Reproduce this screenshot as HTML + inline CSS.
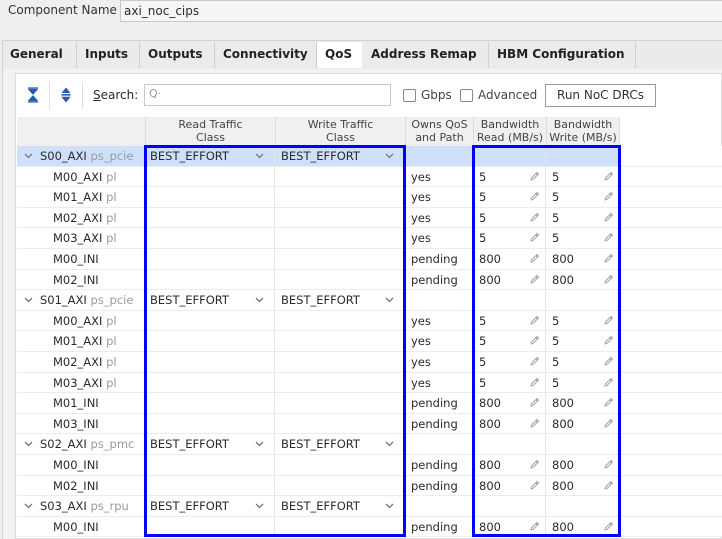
<!DOCTYPE html>
<html><head><meta charset="utf-8"><style>
*{box-sizing:border-box;margin:0;padding:0}
body{width:722px;height:539px;overflow:hidden;background:#efefef;font-family:"DejaVu Sans","Liberation Sans",sans-serif;font-size:11.5px;color:#2a2a2a;position:relative}
.abs{position:absolute}
.tab{position:absolute;top:42px;height:26px;line-height:25px;font-weight:bold;font-size:12px;color:#222;padding-left:8px;border-right:1px solid #cfcfcf}
#tbl{position:absolute;left:17px;top:146px;width:705px}
.r{display:flex;height:20.6px;line-height:20px;border-bottom:1px solid #ececec}
.r div{border-right:1px solid #e6e6e6;white-space:nowrap;overflow:hidden;position:relative}
.c0{width:128px}.c1{width:130px;padding-left:5px}.c2{width:130px;padding-left:6px}.c3{width:68px;padding-left:6px}.c4{width:73px;padding-left:6px}.c5{width:74px;padding-left:6px}
.r .c6{border:none;flex:1;background:#fff}
.sel .c0,.sel .c1,.sel .c2,.sel .c3,.sel .c4,.sel .c5{background:#cfe0fa}
.g{color:#9a9a9a}
.p{padding-left:7px}
.ch{display:inline-block;width:9px;height:6px;margin-right:7px;vertical-align:1px}
.k{padding-left:36px}
.dd{position:absolute;right:10px;top:7px;width:9px;height:6px}
.pen{position:absolute;right:5px;top:4px;width:11px;height:11px}
.box{position:absolute;border:3px solid #0000ff}
</style></head><body>
<svg width="0" height="0" style="position:absolute"><defs>
<symbol id="chv" viewBox="0 0 9 6"><path d="M1 1 L4.5 4.5 L8 1" fill="none" stroke="#777" stroke-width="1.3"/></symbol>
<symbol id="pn" viewBox="0 0 11 11"><path d="M2 9 L2.5 7 L8 1.5 L9.5 3 L4 8.5 Z M7 2.5 L8.5 4" fill="none" stroke="#999" stroke-width="0.9"/></symbol>
</defs></svg>
<div class="abs" style="left:8px;top:3px;font-size:12px;color:#333">Component Name</div>
<div class="abs" style="left:120px;top:0;width:610px;height:22px;background:#f5f5f5;border:1px solid #c8c8c8;padding:3px 3px;font-size:12px">axi_noc_cips</div>
<div class="abs" style="left:2px;top:40px;width:720px;height:29px;background:#ebebeb;border-top:1px solid #d2d2d2;border-left:1px solid #d2d2d2"></div>
<div class="tab" style="left:2px;width:75px">General</div>
<div class="tab" style="left:77px;width:63px">Inputs</div>
<div class="tab" style="left:140px;width:75px">Outputs</div>
<div class="tab" style="left:215px;width:102px">Connectivity</div>
<div class="tab" style="left:317px;width:45px;background:#fff;border-right:none">QoS</div>
<div class="tab" style="left:363px;width:126px">Address Remap</div>
<div class="tab" style="left:489px;width:147px">HBM Configuration</div>
<div class="abs" style="left:2px;top:69px;width:720px;height:470px;background:#f2f2f2;border-left:1px solid #d2d2d2"></div>
<div class="abs" style="left:15px;top:73px;width:707px;height:466px;background:#fff;border:1px solid #dcdcdc"></div>
<svg class="abs" style="left:27px;top:87px" width="12" height="16" viewBox="0 0 12 16"><path d="M1 1H11M2 2.5H10L6 7Z M6 9L10 13.5H2Z M1 15H11" fill="#2a5aa8" stroke="#2a5aa8" stroke-width="1.2"/></svg>
<div class="abs" style="left:49px;top:81px;width:1px;height:28px;background:#ddd"></div>
<svg class="abs" style="left:61px;top:87px" width="10" height="16" viewBox="0 0 10 16"><path d="M5 0.5L9.5 6H0.5Z M0.5 10H9.5L5 15.5Z" fill="#2a5aa8"/><path d="M0.5 7.5H9.5M0.5 8.8H9.5" stroke="#2a5aa8" stroke-width="0.9"/></svg>
<div class="abs" style="left:82px;top:81px;width:1px;height:28px;background:#ddd"></div>
<div class="abs" style="left:93px;top:88px;font-size:12px"><u>S</u>earch:</div>
<div class="abs" style="left:144px;top:84px;width:247px;height:22px;border:1px solid #c8c8c8;background:#fff;color:#999;padding:2px 4px;font-size:11px">Q·</div>
<div class="abs" style="left:403px;top:89px;width:13px;height:13px;border:1px solid #888;border-radius:2px"></div>
<div class="abs" style="left:421px;top:88px;color:#444;font-size:12px">Gbps</div>
<div class="abs" style="left:460px;top:89px;width:13px;height:13px;border:1px solid #888;border-radius:2px"></div>
<div class="abs" style="left:478px;top:88px;color:#444;font-size:12px">Advanced</div>
<div class="abs" style="left:545px;top:84px;width:111px;height:23px;border:1px solid #999;background:#fff;text-align:center;line-height:21px;color:#333;font-size:12px">Run NoC DRCs</div>
<div class="abs" style="left:17px;top:117px;width:603px;height:29px;background:#f0f0f0;font-size:11px;line-height:13px;color:#444">
<div class="abs" style="left:128px;width:130px;height:29px;border-left:1px solid #ddd;text-align:center;padding-top:1px">Read Traffic<br>Class</div>
<div class="abs" style="left:258px;width:130px;height:29px;border-left:1px solid #ddd;text-align:center;padding-top:1px">Write Traffic<br>Class</div>
<div class="abs" style="left:388px;width:68px;height:29px;border-left:1px solid #ddd;text-align:center;padding-top:1px">Owns QoS<br>and Path</div>
<div class="abs" style="left:456px;width:73px;height:29px;border-left:1px solid #ddd;text-align:center;padding-top:1px">Bandwidth<br>Read (MB/s)</div>
<div class="abs" style="left:529px;width:74px;height:29px;border-left:1px solid #ddd;border-right:1px solid #ddd;text-align:center;padding-top:1px">Bandwidth<br>Write (MB/s)</div>
</div>
<div id="tbl">
<div class="r sel"><div class="c0 p"><svg class="ch"><use href="#chv"/></svg>S00_AXI <span class="g">ps_pcie</span></div><div class="c1">BEST_EFFORT<svg class="dd"><use href="#chv"/></svg></div><div class="c2">BEST_EFFORT<svg class="dd"><use href="#chv"/></svg></div><div class="c3"></div><div class="c4"></div><div class="c5"></div><div class="c6"></div></div>
<div class="r"><div class="c0 k">M00_AXI <span class="g">pl</span></div><div class="c1"></div><div class="c2"></div><div class="c3">yes</div><div class="c4">5<svg class="pen"><use href="#pn"/></svg></div><div class="c5">5<svg class="pen"><use href="#pn"/></svg></div><div class="c6"></div></div>
<div class="r"><div class="c0 k">M01_AXI <span class="g">pl</span></div><div class="c1"></div><div class="c2"></div><div class="c3">yes</div><div class="c4">5<svg class="pen"><use href="#pn"/></svg></div><div class="c5">5<svg class="pen"><use href="#pn"/></svg></div><div class="c6"></div></div>
<div class="r"><div class="c0 k">M02_AXI <span class="g">pl</span></div><div class="c1"></div><div class="c2"></div><div class="c3">yes</div><div class="c4">5<svg class="pen"><use href="#pn"/></svg></div><div class="c5">5<svg class="pen"><use href="#pn"/></svg></div><div class="c6"></div></div>
<div class="r"><div class="c0 k">M03_AXI <span class="g">pl</span></div><div class="c1"></div><div class="c2"></div><div class="c3">yes</div><div class="c4">5<svg class="pen"><use href="#pn"/></svg></div><div class="c5">5<svg class="pen"><use href="#pn"/></svg></div><div class="c6"></div></div>
<div class="r"><div class="c0 k">M00_INI</div><div class="c1"></div><div class="c2"></div><div class="c3">pending</div><div class="c4">800<svg class="pen"><use href="#pn"/></svg></div><div class="c5">800<svg class="pen"><use href="#pn"/></svg></div><div class="c6"></div></div>
<div class="r"><div class="c0 k">M02_INI</div><div class="c1"></div><div class="c2"></div><div class="c3">pending</div><div class="c4">800<svg class="pen"><use href="#pn"/></svg></div><div class="c5">800<svg class="pen"><use href="#pn"/></svg></div><div class="c6"></div></div>
<div class="r"><div class="c0 p"><svg class="ch"><use href="#chv"/></svg>S01_AXI <span class="g">ps_pcie</span></div><div class="c1">BEST_EFFORT<svg class="dd"><use href="#chv"/></svg></div><div class="c2">BEST_EFFORT<svg class="dd"><use href="#chv"/></svg></div><div class="c3"></div><div class="c4"></div><div class="c5"></div><div class="c6"></div></div>
<div class="r"><div class="c0 k">M00_AXI <span class="g">pl</span></div><div class="c1"></div><div class="c2"></div><div class="c3">yes</div><div class="c4">5<svg class="pen"><use href="#pn"/></svg></div><div class="c5">5<svg class="pen"><use href="#pn"/></svg></div><div class="c6"></div></div>
<div class="r"><div class="c0 k">M01_AXI <span class="g">pl</span></div><div class="c1"></div><div class="c2"></div><div class="c3">yes</div><div class="c4">5<svg class="pen"><use href="#pn"/></svg></div><div class="c5">5<svg class="pen"><use href="#pn"/></svg></div><div class="c6"></div></div>
<div class="r"><div class="c0 k">M02_AXI <span class="g">pl</span></div><div class="c1"></div><div class="c2"></div><div class="c3">yes</div><div class="c4">5<svg class="pen"><use href="#pn"/></svg></div><div class="c5">5<svg class="pen"><use href="#pn"/></svg></div><div class="c6"></div></div>
<div class="r"><div class="c0 k">M03_AXI <span class="g">pl</span></div><div class="c1"></div><div class="c2"></div><div class="c3">yes</div><div class="c4">5<svg class="pen"><use href="#pn"/></svg></div><div class="c5">5<svg class="pen"><use href="#pn"/></svg></div><div class="c6"></div></div>
<div class="r"><div class="c0 k">M01_INI</div><div class="c1"></div><div class="c2"></div><div class="c3">pending</div><div class="c4">800<svg class="pen"><use href="#pn"/></svg></div><div class="c5">800<svg class="pen"><use href="#pn"/></svg></div><div class="c6"></div></div>
<div class="r"><div class="c0 k">M03_INI</div><div class="c1"></div><div class="c2"></div><div class="c3">pending</div><div class="c4">800<svg class="pen"><use href="#pn"/></svg></div><div class="c5">800<svg class="pen"><use href="#pn"/></svg></div><div class="c6"></div></div>
<div class="r"><div class="c0 p"><svg class="ch"><use href="#chv"/></svg>S02_AXI <span class="g">ps_pmc</span></div><div class="c1">BEST_EFFORT<svg class="dd"><use href="#chv"/></svg></div><div class="c2">BEST_EFFORT<svg class="dd"><use href="#chv"/></svg></div><div class="c3"></div><div class="c4"></div><div class="c5"></div><div class="c6"></div></div>
<div class="r"><div class="c0 k">M00_INI</div><div class="c1"></div><div class="c2"></div><div class="c3">pending</div><div class="c4">800<svg class="pen"><use href="#pn"/></svg></div><div class="c5">800<svg class="pen"><use href="#pn"/></svg></div><div class="c6"></div></div>
<div class="r"><div class="c0 k">M02_INI</div><div class="c1"></div><div class="c2"></div><div class="c3">pending</div><div class="c4">800<svg class="pen"><use href="#pn"/></svg></div><div class="c5">800<svg class="pen"><use href="#pn"/></svg></div><div class="c6"></div></div>
<div class="r"><div class="c0 p"><svg class="ch"><use href="#chv"/></svg>S03_AXI <span class="g">ps_rpu</span></div><div class="c1">BEST_EFFORT<svg class="dd"><use href="#chv"/></svg></div><div class="c2">BEST_EFFORT<svg class="dd"><use href="#chv"/></svg></div><div class="c3"></div><div class="c4"></div><div class="c5"></div><div class="c6"></div></div>
<div class="r"><div class="c0 k">M00_INI</div><div class="c1"></div><div class="c2"></div><div class="c3">pending</div><div class="c4">800<svg class="pen"><use href="#pn"/></svg></div><div class="c5">800<svg class="pen"><use href="#pn"/></svg></div><div class="c6"></div></div>
</div>
<div class="box" style="left:144px;top:145px;width:262px;height:392px"></div>
<div class="box" style="left:472px;top:145px;width:149px;height:392px"></div>
</body></html>
